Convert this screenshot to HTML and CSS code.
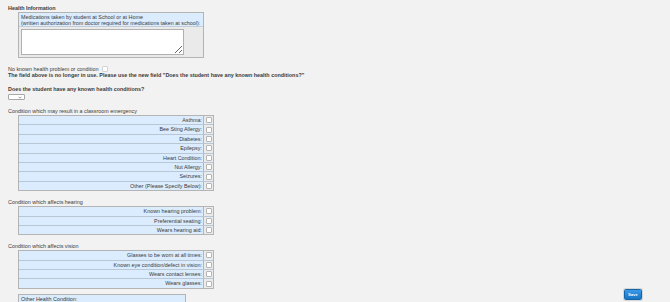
FILE: index.html
```html
<!DOCTYPE html>
<html>
<head>
<meta charset="utf-8">
<link rel="stylesheet" href="styles.css">
</head>
<body>
<div class="page">
  <div class="title">Health Information</div>
  <div class="grid meds">
    <div class="head">Medications taken by student at School or at Home<br>(written authorization from doctor required for medications taken at school):</div>
    <div class="area"><textarea></textarea></div>
  </div>

  <div class="line nokn">No known health problem or condition <input type="checkbox" class="cb"></div>
  <div class="line bold">The field above is no longer in use. Please use the new field "Does the student have any known health conditions?"</div>
  <div class="line bold q">Does the student have any known health conditions?</div>
  <div class="sel"><svg width="4" height="3" viewBox="0 0 4 3"><path d="M0.5 0.7 L2 2.2 L3.5 0.7" fill="none" stroke="#555" stroke-width="0.6"/></svg></div>

  <div class="line sect">Condition which may result in a classroom emergency</div>
  <div class="grid cond">
    <div class="row"><div class="lbl">Asthma:</div><div class="box"><input type="checkbox" class="cb"></div></div>
    <div class="row"><div class="lbl">Bee Sting Allergy:</div><div class="box"><input type="checkbox" class="cb"></div></div>
    <div class="row"><div class="lbl">Diabetes:</div><div class="box"><input type="checkbox" class="cb"></div></div>
    <div class="row"><div class="lbl">Epilepsy:</div><div class="box"><input type="checkbox" class="cb"></div></div>
    <div class="row"><div class="lbl">Heart Condition:</div><div class="box"><input type="checkbox" class="cb"></div></div>
    <div class="row"><div class="lbl">Nut Allergy:</div><div class="box"><input type="checkbox" class="cb"></div></div>
    <div class="row"><div class="lbl">Seizures:</div><div class="box"><input type="checkbox" class="cb"></div></div>
    <div class="row"><div class="lbl">Other (Please Specify Below):</div><div class="box"><input type="checkbox" class="cb"></div></div>
  </div>

  <div class="line sect">Condition which affects hearing</div>
  <div class="grid cond">
    <div class="row"><div class="lbl">Known hearing problem:</div><div class="box"><input type="checkbox" class="cb"></div></div>
    <div class="row"><div class="lbl">Preferential seating:</div><div class="box"><input type="checkbox" class="cb"></div></div>
    <div class="row"><div class="lbl">Wears hearing aid:</div><div class="box"><input type="checkbox" class="cb"></div></div>
  </div>

  <div class="line sect">Condition which affects vision</div>
  <div class="grid cond">
    <div class="row"><div class="lbl">Glasses to be worn at all times:</div><div class="box"><input type="checkbox" class="cb"></div></div>
    <div class="row"><div class="lbl">Known eye condition/defect in vision:</div><div class="box"><input type="checkbox" class="cb"></div></div>
    <div class="row"><div class="lbl">Wears contact lenses:</div><div class="box"><input type="checkbox" class="cb"></div></div>
    <div class="row"><div class="lbl">Wears glasses:</div><div class="box"><input type="checkbox" class="cb"></div></div>
  </div>

  <div class="grid other">
    <div class="head">Other Health Condition:</div>
  </div>
</div>
<button class="save">Save</button>
</body>
</html>
```
FILE: styles.css
```css
html, body {
  margin: 0;
  padding: 0;
}
body {
  background: #f2f2f2;
  font-family: "Liberation Sans", Arial, sans-serif;
  font-size: 5.4px;
  color: #3a3a3a;
  overflow: hidden;
  height: 302px;
}
.page {
  padding: 4px 8px 0 8px;
}
.title {
  font-weight: bold;
  line-height: 8px;
  height: 8px;
}
.grid {
  border: 1px solid #b4b4b4;
  margin-left: 10px;
  background: #eaeaea;
}
.meds {
  width: 186px;
  box-sizing: border-box;
}
.meds .head {
  background: #dbecfe;
  border-bottom: 1px solid #c2cdd8;
  line-height: 6.2px;
  padding: 1px 1px 0 2px;
  height: 14px;
  box-sizing: border-box;
}
.meds .area {
  height: 30px;
  box-sizing: border-box;
  padding: 1.5px 0 0 2px;
}
.meds textarea {
  display: block;
  width: 163px;
  height: 26px;
  box-sizing: border-box;
  border: 1px solid #b0b0b0;
  background: #fff;
  margin: 0;
  padding: 0;
  font-size: 5px;
}
.line {
  line-height: 6px;
  height: 6px;
}
.nokn {
  margin-top: 8px;
  display: flex;
  align-items: center;
  gap: 3px;
}
.bold {
  font-weight: bold;
}
.q {
  margin-top: 8px;
}
.cb {
  appearance: none;
  -webkit-appearance: none;
  width: 6px;
  height: 6px;
  box-sizing: border-box;
  border: 1px solid #b5b5b5;
  border-radius: 1px;
  background: #fff;
  margin: 0;
  display: block;
}
.nokn .cb {
  border-color: #d4d4d4;
}
.sel {
  margin-top: 2px;
  width: 17px;
  height: 6px;
  box-sizing: border-box;
  border: 0.8px solid #a8a8a8;
  border-radius: 1px;
  background: #fff;
  display: flex;
  align-items: center;
  justify-content: flex-end;
  padding-right: 2px;
}
.sect {
  margin-top: 8px;
  margin-bottom: 1px;
}
.cond {
  width: 196px;
  box-sizing: border-box;
}
.row {
  display: flex;
  height: 9.4px;
  box-sizing: border-box;
  border-bottom: 1px solid #b9c6d3;
}
.row:last-child {
  border-bottom: none;
  height: 8.4px;
}
.lbl {
  flex: 1;
  background: #dbecfe;
  text-align: right;
  line-height: 8.4px;
  padding-right: 1px;
  border-right: 1px solid #b4b4b4;
}
.box {
  width: 9px;
  background: #ebebeb;
  display: flex;
  align-items: center;
  justify-content: center;
}
.other {
  width: 168px;
  margin-top: 5px;
  box-sizing: border-box;
}
.other .head {
  background: #dbecfe;
  line-height: 7px;
  padding: 1px 1px 0 2px;
}
.save {
  position: fixed;
  right: 28px;
  bottom: 2px;
  width: 18px;
  height: 11px;
  padding: 0;
  border: 1px solid #1466a8;
  border-radius: 1.5px;
  background: linear-gradient(#3a9ae8, #1676c6);
  color: #fff;
  font-family: "Liberation Sans", Arial, sans-serif;
  font-weight: bold;
  font-size: 4px;
  box-shadow: 0 0 0 1px #d6d6d6;
}
```
